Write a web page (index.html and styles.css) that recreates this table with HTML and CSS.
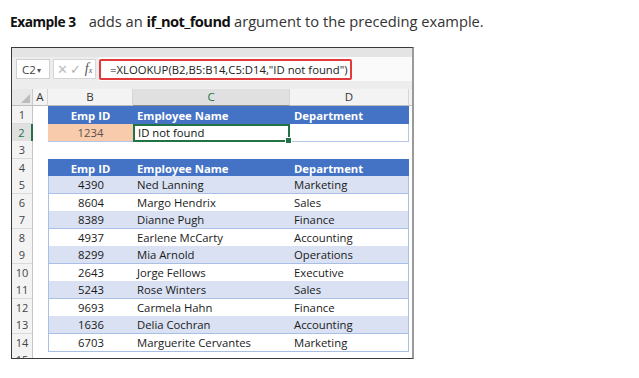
FILE: index.html
```html
<!DOCTYPE html>
<html>
<head>
<meta charset="utf-8">
<link rel="stylesheet" href="styles.css">
</head>
<body>
<p class="intro"><b class="lead">Example 3</b>adds an <b class="kw">if_not_found</b> argument to the preceding example.</p>
<div class="frame">
  <div class="strip"></div>
  <div class="fbar">
    <div class="namebox">C2<span class="caret">▾</span></div>
    <div class="fxbox"><span class="x">✕</span><span class="ok">✓</span><span class="fx">f<sub>x</sub></span></div>
    <div class="finput"><div class="formula">=XLOOKUP(B2,B5:B14,C5:D14,"ID not found")</div></div>
  </div>
  <div class="gap"></div>
  <div class="grid">
    <div class="row colhdr">
      <div class="corner"><span class="tri"></span></div>
      <div class="ch">A</div><div class="ch">B</div><div class="ch sel">C</div><div class="ch">D</div><div class="ch end"></div>
    </div>
    <div class="row">
      <div class="rh">1</div><div class="c"></div>
      <div class="c th ctr">Emp ID</div><div class="c th">Employee Name</div><div class="c th">Department</div><div class="c"></div>
    </div>
    <div class="row">
      <div class="rh on">2</div><div class="c"></div>
      <div class="c inp ctr">1234</div><div class="c res">ID not found<span class="handle"></span></div><div class="c res2"></div><div class="c"></div>
    </div>
    <div class="row">
      <div class="rh">3</div><div class="c"></div><div class="c"></div><div class="c"></div><div class="c"></div><div class="c"></div>
    </div>
    <div class="row">
      <div class="rh">4</div><div class="c"></div>
      <div class="c th ctr">Emp ID</div><div class="c th">Employee Name</div><div class="c th">Department</div><div class="c"></div>
    </div>
    <div class="row band">
      <div class="rh">5</div><div class="c"></div><div class="c td ctr">4390</div><div class="c td">Ned Lanning</div><div class="c td">Marketing</div><div class="c"></div>
    </div>
    <div class="row">
      <div class="rh">6</div><div class="c"></div><div class="c td ctr">8604</div><div class="c td">Margo Hendrix</div><div class="c td">Sales</div><div class="c"></div>
    </div>
    <div class="row band">
      <div class="rh">7</div><div class="c"></div><div class="c td ctr">8389</div><div class="c td">Dianne Pugh</div><div class="c td">Finance</div><div class="c"></div>
    </div>
    <div class="row">
      <div class="rh">8</div><div class="c"></div><div class="c td ctr">4937</div><div class="c td">Earlene McCarty</div><div class="c td">Accounting</div><div class="c"></div>
    </div>
    <div class="row band">
      <div class="rh">9</div><div class="c"></div><div class="c td ctr">8299</div><div class="c td">Mia Arnold</div><div class="c td">Operations</div><div class="c"></div>
    </div>
    <div class="row">
      <div class="rh">10</div><div class="c"></div><div class="c td ctr">2643</div><div class="c td">Jorge Fellows</div><div class="c td">Executive</div><div class="c"></div>
    </div>
    <div class="row band">
      <div class="rh">11</div><div class="c"></div><div class="c td ctr">5243</div><div class="c td">Rose Winters</div><div class="c td">Sales</div><div class="c"></div>
    </div>
    <div class="row">
      <div class="rh">12</div><div class="c"></div><div class="c td ctr">9693</div><div class="c td">Carmela Hahn</div><div class="c td">Finance</div><div class="c"></div>
    </div>
    <div class="row band">
      <div class="rh">13</div><div class="c"></div><div class="c td ctr">1636</div><div class="c td">Delia Cochran</div><div class="c td">Accounting</div><div class="c"></div>
    </div>
    <div class="row last">
      <div class="rh">14</div><div class="c"></div><div class="c td ctr">6703</div><div class="c td">Marguerite Cervantes</div><div class="c td">Marketing</div><div class="c"></div>
    </div>
    <div class="row">
      <div class="rh">15</div><div class="c"></div><div class="c"></div><div class="c"></div><div class="c"></div><div class="c"></div>
    </div>
  </div>
</div>
</body>
</html>
```

FILE: styles.css
```css
html, body { margin: 0; padding: 0; background: #fff; }
body { font-family: "Open Sans", "Noto Sans", sans-serif; }

.intro {
  margin: 0;
  padding: 11px 0 0 10px;
  height: 25px;
  font-size: 14.7px;
  line-height: 20px;
  color: #333;
  white-space: nowrap;
}
.intro b { color: #111; font-weight: 700; letter-spacing: -0.6px; }
.intro .lead { margin-right: 13px; font-size: 13.8px; letter-spacing: -0.5px; }

.frame {
  margin: 11px 0 0 11px;
  width: 400px;
  height: 310px;
  border: 1px solid #3a3a3a;
  border-right: 2px solid #9a9a9a;
  overflow: hidden;
  background: #fff;
  font-family: "Open Sans", "Noto Sans", sans-serif;
}

.strip { height: 9px; background: #e4e4e4; }
.fbar {
  height: 24px;
  background: #ededed;
  display: flex;
  align-items: center;
  padding-left: 4px;
  gap: 3px;
}
.namebox {
  width: 34px; height: 20px;
  background: #fff;
  border: 1px solid #d0d0d0;
  font-size: 11.5px;
  color: #444;
  display: flex; align-items: center; padding-left: 5px;
  box-sizing: border-box;
}
.caret { font-size: 8px; color: #555; margin-left: 1px; }
.fxbox {
  width: 43px; height: 20px;
  background: #fff;
  border: 1px solid #d6d6d6;
  box-sizing: border-box;
  display: flex; align-items: center; justify-content: center; gap: 2px;
  color: #bdbdbd; font-size: 13px;
}
.fxbox .ok { color: #b3b3b3; }
.fxbox .fx { color: #555; font-family: "Liberation Serif", serif; font-style: italic; font-size: 14px; margin-left: 2px; }
.fxbox sub { font-size: 8px; vertical-align: 0; }
.finput {
  flex: 1;
  height: 24px;
  background: #fafafa;
  display: flex; align-items: center;
}
.formula {
  width: 253px; height: 21px;
  box-sizing: border-box;
  border: 2px solid #e23a3a;
  border-radius: 2px;
  background: #fff;
  font-size: 11.3px;
  color: #222;
  padding-left: 9px;
  line-height: 17px;
  white-space: nowrap;
}
.gap { height: 8px; background: #ededed; }

.grid { font-size: 11px; }
.row {
  display: grid;
  grid-template-columns: 21px 15px 85px 157px 119px 3px;
  height: 17.5px;
}
.colhdr { height: 17px; }
.corner { background: #e8e8e8; border-right: 1px solid #c8c8c8; border-bottom: 1px solid #bdbdbd; position: relative; }
.tri {
  position: absolute; right: 2px; bottom: 2px;
  width: 0; height: 0;
  border-left: 9px solid transparent;
  border-bottom: 9px solid #bcbcbc;
}
.ch {
  background: #f3f3f3;
  border-right: 1px solid #d6d6d6;
  border-bottom: 1px solid #bdbdbd;
  text-align: center;
  color: #333;
  line-height: 16px;
  font-size: 11.5px;
}
.ch.sel { background: #e0e0e0; border-bottom: 1px solid #8a8a8a; color: #217346; }
.ch.end { border-right: none; background: #f3f3f3; }

.rh {
  background: #f3f3f3;
  border-right: 1px solid #c4c4c4;
  border-bottom: 1px solid #dadada;
  text-align: center;
  color: #444;
  line-height: 17px;
  font-size: 11px;
  box-sizing: border-box;
}
.rh.on { background: #e0e0e0; border-right: 2px solid #217346; color: #217346; }

.c { line-height: 17px; white-space: nowrap; box-sizing: border-box; overflow: visible; }
.ctr { text-align: center; }
.th, .td, .res, .res2 { padding-left: 4px; }
.th.ctr, .td.ctr { padding-left: 0; }

.th {
  background: #4472c4;
  color: #fff;
  font-weight: 700;
  font-size: 11.3px;
  border-top: 1px solid #4472c4;
}
.td {
  color: #1a1a1a;
  font-size: 11.3px;
  border-bottom: 1px solid #a9bfe6;
}
.band .td { background: #d9e1f2; }
.row .td:nth-child(3) { border-left: 1px solid #a9bfe6; }
.row .td:nth-child(5) { border-right: 1px solid #a9bfe6; }

.inp {
  background: #f8cbad;
  color: #5c5048;
  font-size: 11.3px;
  border-bottom: 1px solid #b4c6e7;
}
.res {
  position: relative;
  border: 2px solid #217346;
  color: #111;
  font-size: 11.3px;
  line-height: 14px;
  padding-left: 3px;
}
.handle {
  position: absolute;
  right: -4px; bottom: -4px;
  width: 5px; height: 5px;
  background: #217346;
  border: 1px solid #fff;
}
.res2 {
  border-bottom: 1px solid #b4c6e7;
  border-right: 1px solid #b4c6e7;
}
```
